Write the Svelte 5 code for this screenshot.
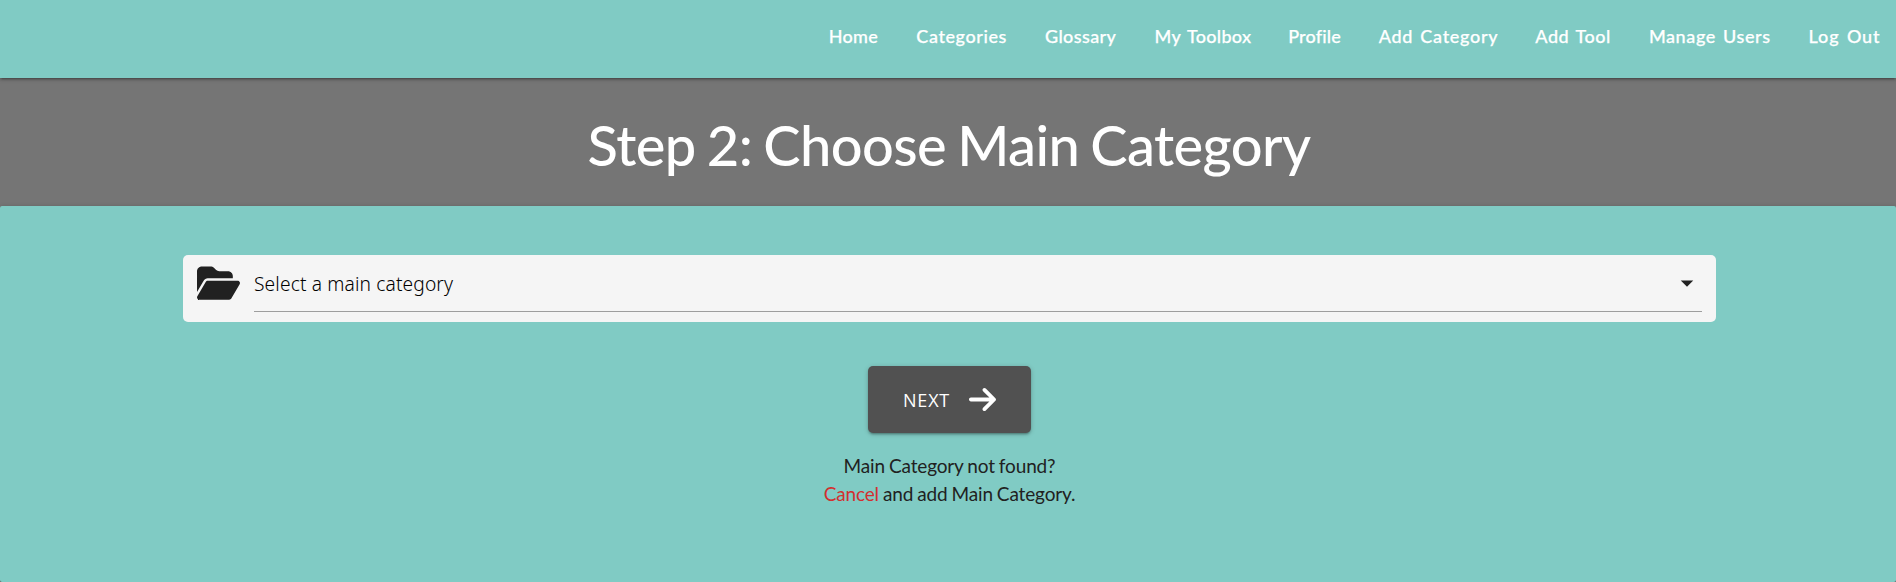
<script>
  const links = [
    { label: 'Home', width: 50, spacing: 0.3 },
    { label: 'Categories', width: 91, spacing: 0.6 },
    { label: 'Glossary', width: 72, spacing: 0.4 },
    { label: 'My Toolbox', width: 96, spacing: 0.3 },
    { label: 'Profile', width: 53, spacing: 0.2 },
    { label: 'Add Category', width: 119, spacing: 0.7 },
    { label: 'Add Tool', width: 76, spacing: 0.5 },
    { label: 'Manage Users', width: 122, spacing: 0.6 },
    { label: 'Log Out', width: 72, spacing: 0.9 },
  ];
</script>

<div class="page">
  <nav>
    {#each links as link}
      <a href="#top" style="width:{link.width}px;letter-spacing:{link.spacing}px">{link.label}</a>
    {/each}
  </nav>
  <header><h1>Step 2: Choose Main Category</h1></header>
  <main>
    <div class="field">
      <svg class="folder" viewBox="0 0 576 512" aria-hidden="true"><path d="M88.7 223.8L0 375.8V96C0 60.7 28.7 32 64 32H181.5c17 0 33.3 6.7 45.3 18.7l26.5 26.5c12 12 28.3 18.7 45.3 18.7H416c35.3 0 64 28.7 64 64v32H144c-22.8 0-43.8 12.1-55.3 31.8zm27.6 16.1C122.1 230 132.6 224 144 224H544c11.5 0 22 6.1 27.7 16.1s5.7 22.2-.1 32.1l-112 192C453.9 474 443.4 480 432 480H32c-11.5 0-22-6.1-27.7-16.1s-5.7-22.2 .1-32.1l112-192z" /></svg>
      <div class="select">
        <span>Select a main category</span>
        <svg class="caret" viewBox="0 0 24 24" aria-hidden="true"><path d="M7 10l5 5 5-5z" /></svg>
      </div>
    </div>
    <button type="button">
      <span>NEXT</span>
      <svg viewBox="0 0 448 512" aria-hidden="true"><path d="M438.6 278.6c12.5-12.5 12.5-32.8 0-45.3l-160-160c-12.5-12.5-32.8-12.5-45.3 0s-12.5 32.8 0 45.3L338.8 224 32 224c-17.7 0-32 14.3-32 32s14.3 32 32 32l306.7 0L233.4 393.4c-12.5 12.5-12.5 32.8 0 45.3s32.8 12.5 45.3 0l160-160z" /></svg>
    </button>
    <p class="first">Main Category not found?</p>
    <p class="second"><a href="#top">Cancel</a> and add Main Category.</p>
  </main>
</div>

<style>
  :global(body) { margin: 0; background: #757575; }
  .page {
    height: 582px;
    display: flex;
    flex-direction: column;
    overflow: hidden;
    background: #757575;
    font-family: Lato, sans-serif;
  }
  nav {
    height: 78px;
    box-sizing: border-box;
    padding-right: 15.5px;
    display: flex;
    justify-content: flex-end;
    gap: 37.6px;
    background: #80cbc4;
    box-shadow: 0 2px 2px 0 rgba(0,0,0,.14), 0 3px 1px -2px rgba(0,0,0,.12), 0 1px 5px 0 rgba(0,0,0,.2);
    z-index: 1;
    flex: none;
  }
  nav a {
    color: #fff;
    text-decoration: none;
    font-size: 18px;
    font-weight: 500;
    line-height: 72px;
    word-spacing: 2px;
    -webkit-text-stroke: 0.25px #fff;
    white-space: nowrap;
  }
  header {
    height: 128px;
    flex: none;
    display: flex;
    justify-content: center;
    align-items: center;
  }
  h1 {
    margin: 6px 0 0 2px;
    font-size: 56px;
    font-weight: 500;
    line-height: 62px;
    letter-spacing: -0.6px;
    word-spacing: -2.4px;
    color: #fff;
    white-space: nowrap;
  }
  main {
    height: 376px;
    flex: none;
    box-sizing: border-box;
    padding: 49px 180px 0 183px;
    display: flex;
    flex-direction: column;
    align-items: center;
    border-radius: 2px;
    background: #80cbc4;
    box-shadow: 0 2px 2px 0 rgba(0,0,0,.14), 0 3px 1px -2px rgba(0,0,0,.12), 0 1px 5px 0 rgba(0,0,0,.2);
  }
  .field {
    width: 100%;
    height: 67px;
    flex: none;
    box-sizing: border-box;
    display: flex;
    align-items: flex-start;
    gap: 14px;
    padding: 0 14px;
    border-radius: 5px;
    background: #f5f5f5;
  }
  .folder { width: 43px; height: 38.2px; margin-top: 8.5px; fill: #212121; flex: none; }
  .select {
    flex: 1;
    height: 56px;
    display: flex;
    justify-content: space-between;
    border-bottom: 1px solid #9e9e9e;
    font: 350 19.2px/58px "Noto Sans", "Open Sans", sans-serif;
    letter-spacing: 0.13px;
    color: #000;
  }
  .caret { width: 30px; height: 30px; margin-top: 13px; fill: #212121; }
  button {
    margin-top: 44px;
    width: 163px;
    height: 67px;
    flex: none;
    display: flex;
    align-items: center;
    justify-content: flex-start;
    padding: 0 35px;
    border: 0;
    border-radius: 5px;
    background: #515151;
    box-shadow: 0 2px 2px 0 rgba(0,0,0,.14), 0 3px 1px -2px rgba(0,0,0,.12), 0 1px 5px 0 rgba(0,0,0,.2);
    color: #fff;
    font: 400 18px/28px "Open Sans", sans-serif;
    letter-spacing: 0.8px;
  }
  button span { width: 66px; text-align: left; }
  button svg { width: 27px; height: 31px; fill: #fff; }
  p {
    margin: 0;
    font-size: 19px;
    font-weight: 400;
    line-height: 28px;
    letter-spacing: -0.15px;
    word-spacing: -0.7px;
    color: #212121;
    white-space: nowrap;
  }
  .first { margin-top: 19px; }
  p a { color: #d32f2f; text-decoration: none; }
</style>
